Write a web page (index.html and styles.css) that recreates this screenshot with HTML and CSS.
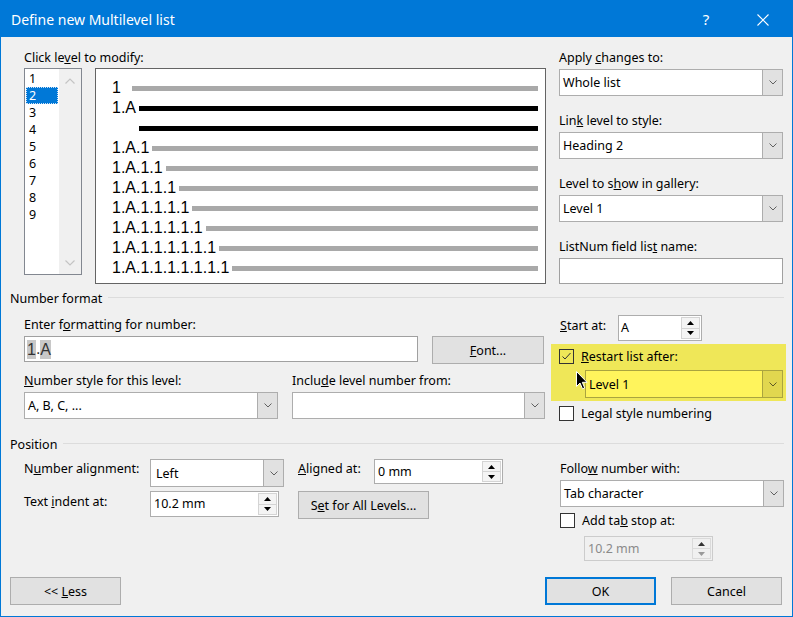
FILE: index.html
```html
<!DOCTYPE html>
<html>
<head>
<meta charset="utf-8">
<title>Define new Multilevel list</title>
<link rel="stylesheet" href="styles.css">
</head>
<body>
<div class="window">
  <div class="titlebar">
    <span class="title">Define new Multilevel list</span>
    <span class="tb-btn help">?</span>
    <span class="tb-btn close"><svg width="12" height="12" viewBox="0 0 12 12"><path d="M0.5 0.5L11.5 11.5M11.5 0.5L0.5 11.5" stroke="#fff" stroke-width="1.1" fill="none"/></svg></span>
  </div>

  <div class="top">
    <div class="left">
      <div class="label">Click le<u>v</u>el to modify:</div>
      <div class="lp-row">
        <div class="listbox">
          <div class="items">
            <div class="item">1</div>
            <div class="item sel">2</div>
            <div class="item">3</div>
            <div class="item">4</div>
            <div class="item">5</div>
            <div class="item">6</div>
            <div class="item">7</div>
            <div class="item">8</div>
            <div class="item">9</div>
          </div>
          <div class="vscroll">
            <svg width="10" height="6" viewBox="0 0 10 6"><polyline points="0.5,5.5 5,1 9.5,5.5" fill="none" stroke="#c4c4c4" stroke-width="1.2"/></svg>
            <svg width="10" height="6" viewBox="0 0 10 6"><polyline points="0.5,0.5 5,5 9.5,0.5" fill="none" stroke="#c4c4c4" stroke-width="1.2"/></svg>
          </div>
        </div>
        <div class="preview">
          <div class="pl"><span class="pt">1</span><span class="bar first"></span></div>
          <div class="pl"><span class="pt">1.A</span><span class="bar black"></span></div>
          <div class="pl"><span class="pt ghost">1.A</span><span class="bar black"></span></div>
          <div class="pl"><span class="pt">1.A.1</span><span class="bar"></span></div>
          <div class="pl"><span class="pt">1.A.1.1</span><span class="bar"></span></div>
          <div class="pl"><span class="pt">1.A.1.1.1</span><span class="bar"></span></div>
          <div class="pl"><span class="pt">1.A.1.1.1.1</span><span class="bar"></span></div>
          <div class="pl"><span class="pt">1.A.1.1.1.1.1</span><span class="bar"></span></div>
          <div class="pl"><span class="pt">1.A.1.1.1.1.1.1</span><span class="bar"></span></div>
          <div class="pl"><span class="pt">1.A.1.1.1.1.1.1.1</span><span class="bar"></span></div>
        </div>
      </div>
    </div>

    <div class="right">
      <div class="field">
        <div class="label">Apply <u>c</u>hanges to:</div>
        <div class="combo"><span class="val">Whole list</span><span class="dd"><svg width="8" height="5" viewBox="0 0 8 5"><polyline points="0.5,0.5 4,4 7.5,0.5" fill="none" stroke="#606060"/></svg></span></div>
      </div>
      <div class="field">
        <div class="label">Lin<u>k</u> level to style:</div>
        <div class="combo"><span class="val">Heading 2</span><span class="dd"><svg width="8" height="5" viewBox="0 0 8 5"><polyline points="0.5,0.5 4,4 7.5,0.5" fill="none" stroke="#606060"/></svg></span></div>
      </div>
      <div class="field">
        <div class="label">Level to s<u>h</u>ow in gallery:</div>
        <div class="combo"><span class="val">Level 1</span><span class="dd"><svg width="8" height="5" viewBox="0 0 8 5"><polyline points="0.5,0.5 4,4 7.5,0.5" fill="none" stroke="#606060"/></svg></span></div>
      </div>
      <div class="field">
        <div class="label">ListNum field lis<u>t</u> name:</div>
        <div class="textbox"></div>
      </div>
    </div>
  </div>

  <div class="group-h nf-h"><span>Number format</span><i class="rule"></i></div>
  <div class="nf">
    <div class="nf-left">
      <div class="label">Enter f<u>o</u>rmatting for number:</div>
      <div class="nf-row1">
        <div class="textbox fmt"><span class="fld">1</span>.<span class="fld">A</span></div>
        <div class="btn font"><span><u>F</u>ont...</span></div>
      </div>
      <div class="nf-row2">
        <div class="col c1">
          <div class="label"><u>N</u>umber style for this level:</div>
          <div class="combo"><span class="val">A, B, C, ...</span><span class="dd"><svg width="8" height="5" viewBox="0 0 8 5"><polyline points="0.5,0.5 4,4 7.5,0.5" fill="none" stroke="#606060"/></svg></span></div>
        </div>
        <div class="col c2">
          <div class="label">Inclu<u>d</u>e level number from:</div>
          <div class="combo"><span class="val"></span><span class="dd"><svg width="8" height="5" viewBox="0 0 8 5"><polyline points="0.5,0.5 4,4 7.5,0.5" fill="none" stroke="#606060"/></svg></span></div>
        </div>
      </div>
    </div>
    <div class="nf-right">
      <div class="start-row">
        <span class="label start-lbl"><u>S</u>tart at:</span>
        <div class="spin start"><span class="val">A</span><span class="arrows"><span><svg width="7" height="4" viewBox="0 0 7 4"><polygon points="0,4 3.5,0 7,4" fill="#000"/></svg></span><span><svg width="7" height="4" viewBox="0 0 7 4"><polygon points="0,0 3.5,4 7,0" fill="#000"/></svg></span></span></div>
      </div>
      <div class="hl">
        <div class="check-row"><span class="cb"><svg width="13" height="13" viewBox="0 0 13 13"><polyline points="2.5,6.5 5,9 10.5,3" fill="none" stroke="#333" stroke-width="1"/></svg></span><span><u>R</u>estart list after:</span></div>
        <div class="combo yellow"><span class="val">Level 1</span><span class="dd"><svg width="8" height="5" viewBox="0 0 8 5"><polyline points="0.5,0.5 4,4 7.5,0.5" fill="none" stroke="#5d5826"/></svg></span></div>
        <svg class="cursor" width="12" height="19" viewBox="0 0 12 19"><path d="M0.5 0.5 V15.5 L4 12 L6.5 17.8 L8.7 16.9 L6.3 11.3 H11 Z" fill="#000" stroke="#fff" stroke-width="1" stroke-linejoin="round"/></svg>
      </div>
      <div class="check-row legal"><span class="cb"></span><span>Legal style numbering</span></div>
    </div>
  </div>

  <div class="group-h pos-h"><span>Position</span><i class="rule"></i></div>
  <div class="pos">
    <div class="pos-grid">
      <div class="label r1">N<u>u</u>mber alignment:</div>
      <div class="combo align"><span class="val">Left</span><span class="dd"><svg width="8" height="5" viewBox="0 0 8 5"><polyline points="0.5,0.5 4,4 7.5,0.5" fill="none" stroke="#606060"/></svg></span></div>
      <div class="label r1 c4"><u>A</u>ligned at:</div>
      <div class="spin aligned c5"><span class="val">0 mm</span><span class="arrows"><span><svg width="7" height="4" viewBox="0 0 7 4"><polygon points="0,4 3.5,0 7,4" fill="#000"/></svg></span><span><svg width="7" height="4" viewBox="0 0 7 4"><polygon points="0,0 3.5,4 7,0" fill="#000"/></svg></span></span></div>
      <div class="label r2">Text <u>i</u>ndent at:</div>
      <div class="spin indent"><span class="val">10.2 mm</span><span class="arrows"><span><svg width="7" height="4" viewBox="0 0 7 4"><polygon points="0,4 3.5,0 7,4" fill="#000"/></svg></span><span><svg width="7" height="4" viewBox="0 0 7 4"><polygon points="0,0 3.5,4 7,0" fill="#000"/></svg></span></span></div>
      <div class="btn setall"><span>S<u>e</u>t for All Levels...</span></div>
    </div>
    <div class="pos-right">
      <div class="label">Follo<u>w</u> number with:</div>
      <div class="combo"><span class="val">Tab character</span><span class="dd"><svg width="8" height="5" viewBox="0 0 8 5"><polyline points="0.5,0.5 4,4 7.5,0.5" fill="none" stroke="#606060"/></svg></span></div>
      <div class="check-row tabstop"><span class="cb"></span><span>Add ta<u>b</u> stop at:</span></div>
      <div class="spin disabled"><span class="val">10.2 mm</span><span class="arrows"><span><svg width="7" height="4" viewBox="0 0 7 4"><polygon points="0,4 3.5,0 7,4" fill="#333"/></svg></span><span><svg width="7" height="4" viewBox="0 0 7 4"><polygon points="0,0 3.5,4 7,0" fill="#9a9a9a"/></svg></span></span></div>
    </div>
  </div>

  <div class="buttons">
    <div class="btn less"><span>&lt;&lt; <u>L</u>ess</span></div>
    <div class="btn ok default"><span>OK</span></div>
    <div class="btn cancel"><span>Cancel</span></div>
  </div>
</div>
</body>
</html>
```
FILE: styles.css
```css
* { box-sizing: border-box; }
html, body { margin: 0; padding: 0; background: #f0f0f0; }
body {
  font-family: "Noto Sans", "Segoe UI", "Liberation Sans", sans-serif;
  font-size: 12.5px;
  color: #000;
}
u { text-decoration: underline; text-underline-offset: 1px; }

.window {
  width: 793px;
  height: 617px;
  border: 1px solid #0078d7;
  border-top: 0;
  background: #f0f0f0;
  display: flex;
  flex-direction: column;
  position: relative;
  overflow: hidden;
}

/* title bar */
.titlebar {
  height: 37px;
  flex: none;
  background: #0078d7;
  color: #fff;
  display: flex;
  align-items: center;
  padding: 2px 6px 0 10px;
}
.title { font-size: 14px; white-space: nowrap; }
.tb-btn { width: 46px; display: flex; justify-content: center; align-items: center; }
.help { margin-left: auto; font-size: 15px; line-height: 1; }
.close { margin-left: 11px; }

.label { line-height: 16px; white-space: nowrap; padding-top: 1px; }

/* top */
.top { display: flex; padding: 12px 8px 0 23px; flex: none; }
.left { width: 522px; }
.lp-row { display: flex; margin-top: 2px; }

.listbox {
  width: 58px;
  height: 207px;
  border: 1px solid #828790;
  background: #fff;
  display: flex;
}
.items { width: 34px; padding-top: 1px; }
.item { height: 17px; line-height: 18px; margin: 0 1px; padding-left: 3px; }
.item.sel {
  background: #0078d7;
  color: #fff;
  outline: 1px dotted #cfe3f7;
  outline-offset: -1px;
}
.vscroll {
  flex: 1;
  background: #f0f0f0;
  display: flex;
  flex-direction: column;
  justify-content: space-between;
  align-items: center;
  padding: 9px 0 8px;
}

.preview {
  margin-left: 13px;
  width: 451px;
  height: 216px;
  border: 1px solid #646464;
  background: #fff;
  padding: 9px 7px 0 16px;
}
.pl {
  display: flex;
  align-items: center;
  height: 20px;
  font-family: "Liberation Sans", Arial, sans-serif;
  font-size: 16px;
}
.pt { line-height: 20px; white-space: nowrap; }
.pt.ghost { visibility: hidden; }
.bar { flex: 1; height: 5px; margin-left: 3px; background: #a9a9a9; }
.bar.first { margin-left: 11px; }
.bar.black { background: #000; }

.right { margin-left: 13px; width: 224px; }
.field + .field { margin-top: 16px; }
.field .combo, .field .textbox { margin-top: 3px; }

/* controls */
.combo {
  display: flex;
  height: 27px;
  border: 1px solid #adadad;
  background: #fff;
}
.combo .val { flex: 1; padding-left: 3px; line-height: 25px; white-space: nowrap; overflow: hidden; }
.combo .dd {
  width: 20px;
  border-left: 1px solid #adadad;
  background: #e1e1e1;
  display: flex;
  align-items: center;
  justify-content: center;
}
.textbox { height: 26px; border: 1px solid #a0a0a0; background: #fff; }

.spin {
  display: flex;
  height: 26px;
  border: 1px solid #adadad;
  background: #fff;
}
.spin .val { flex: 1; padding-left: 2px; line-height: 24px; white-space: nowrap; }
.spin .arrows {
  width: 20px;
  display: flex;
  flex-direction: column;
  padding: 1px 1px 1px 0;
}
.spin .arrows span {
  flex: 1;
  border: 1px solid #d4d4d4;
  background: #f4f4f4;
  display: flex;
  align-items: center;
  justify-content: center;
}
.spin .arrows span + span { border-top: 0; }
.spin.disabled { border-color: #cccccc; background: #f0f0f0; color: #8a8a8a; }
.spin.disabled .arrows span { background: #f0f0f0; border-color: #dadada; }

.btn {
  height: 28px;
  border: 1px solid #adadad;
  background: #e1e1e1;
  display: flex;
  align-items: center;
  justify-content: center;
  white-space: nowrap;
}
.btn.default { border: 2px solid #0078d7; }

.cb {
  width: 15px;
  height: 15px;
  border: 1px solid #333;
  background: #fff;
  flex: none;
  display: flex;
  align-items: center;
  justify-content: center;
}
.check-row { display: flex; align-items: center; height: 16px; line-height: 16px; white-space: nowrap; }
.check-row .cb + span { margin-left: 7px; padding-top: 2px; }

/* group headers */
.group-h {
  display: flex;
  align-items: center;
  height: 16px;
  line-height: 16px;
  padding: 0 8px 0 9px;
  flex: none;
}
.group-h .rule { flex: 1; height: 1px; background: #dcdcdc; margin-left: 6px; margin-top: -1px; }
.group-h span { padding-top: 2px; }
.nf-h { margin-top: 6px; }
.pos-h { margin-top: 15px; }

/* number format */
.nf { display: flex; padding: 0 5px 0 23px; flex: none; }
.nf-left { width: 521px; padding-top: 10px; }
.nf-row1 { display: flex; align-items: flex-start; margin-top: 3px; }
.fmt {
  width: 394px;
  display: flex;
  align-items: center;
  padding-left: 2px;
  font-family: "Liberation Sans", Arial, sans-serif;
  font-size: 16px;
  color: #333;
}
.fld { background: #c8c8c8; line-height: 19px; }
.btn.font { width: 112px; margin-left: 14px; }
.nf-row2 { display: flex; margin-top: 8px; }
.nf-row2 .combo { margin-top: 3px; }
.col.c1 { width: 254px; }
.col.c2 { width: 253px; margin-left: 14px; }

.nf-right { margin-left: 6px; width: 235px; padding: 9px 3px 0 8px; }
.start-row { display: flex; }
.start-lbl { width: 59px; padding: 3px 0 0 1px; }
.spin.start { width: 84px; }

.hl {
  position: relative;
  margin: 3px -3px 0 -8px;
  padding: 4px 3px 3px 8px;
  background: #efe758;
}
.hl .cb { background: transparent; }
.combo.yellow {
  margin: 6px 0 0 26px;
  height: 28px;
  background: #fff45c;
  border-color: #aaa43f;
}
.combo.yellow .val { line-height: 27px; }
.combo.yellow .dd { background: #e1d74f; border-left-color: #aaa43f; }
.cursor { position: absolute; left: 25px; top: 27px; }
.legal { margin-top: 4px; }

/* position */
.pos { display: flex; padding: 7px 8px 0 23px; flex: none; }
.pos-grid {
  display: grid;
  grid-template-columns: 126px 134px 14px 76px 129px;
  grid-template-rows: 28px 28px;
  row-gap: 4px;
  align-items: start;
}
.label.r1 { padding-top: 2px; }
.label.r2 { padding-top: 3px; grid-column: 1; grid-row: 2; }
.combo.align { height: 28px; grid-column: 2; grid-row: 1; }
.combo.align .val { line-height: 27px; padding-left: 5px; }
.c4 { grid-column: 4; grid-row: 1; }
.c5 { grid-column: 5; grid-row: 1; }
.spin.aligned { height: 25px; }
.spin.aligned .val { padding-left: 3px; line-height: 23px; }
.spin.indent { grid-column: 2; grid-row: 2; width: 129px; }
.spin.indent .val { padding-left: 3px; }
.btn.setall { grid-column: 4 / span 2; grid-row: 2; width: 131px; }

.pos-right { margin-left: auto; width: 224px; padding-top: 1px; }
.pos-right .combo { margin-top: 3px; }
.tabstop { margin-top: 5px; }
.spin.disabled { margin: 8px 0 0 24px; width: 129px; height: 25px; }
.spin.disabled .val { line-height: 23px; padding-left: 3px; }

/* bottom buttons */
.buttons { margin-top: auto; display: flex; padding: 0 10px 11px 9px; flex: none; }
.btn span { padding-top: 1px; }
.btn.less { width: 111px; }
.btn.ok { margin-left: auto; width: 111px; }
.btn.cancel { margin-left: 15px; width: 111px; }
```
